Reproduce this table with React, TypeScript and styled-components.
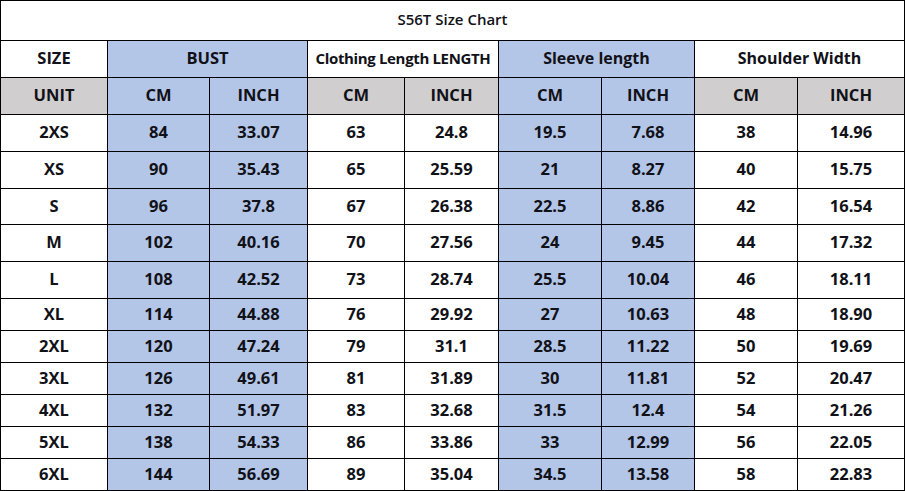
import React from "react";
import styled, { createGlobalStyle } from "styled-components";

const GlobalStyle = createGlobalStyle`
  html, body { margin: 0; padding: 0; background: #fff; }
  body { font-family: "Open Sans", "Liberation Sans", sans-serif; }
`;

const BLUE = "#b4c6e7";
const GRAY = "#d0cece";
const WHITE = "#ffffff";

const Chart = styled.div`
  display: grid;
  width: 905px;
  box-sizing: border-box;
  padding: 1px;
  gap: 1px;
  background: #000;
  grid-template-columns: 106px 101px 97px 96px 93px 102px 92px 102px 106px;
  grid-template-rows: 39px 36px 36px 36px 36px 35px 36px 36px 31px 31px 31px 31px 31px 31px;
`;

const Cell = styled.div<{ $bg?: string; $span?: number; $size?: number; $spacing?: number }>`
  display: flex;
  align-items: center;
  justify-content: center;
  box-sizing: border-box;
  padding-bottom: 3px;
  background: ${(p) => p.$bg || WHITE};
  grid-column: span ${(p) => p.$span || 1};
  font-size: ${(p) => p.$size || 16.5}px;
  letter-spacing: ${(p) => p.$spacing || 0}px;
  font-weight: 700;
  color: #111118;
  white-space: nowrap;
  overflow: hidden;
`;

const Title = styled(Cell)`
  font-weight: 600;
`;

const rows: string[][] = [
  ["2XS", "84", "33.07", "63", "24.8", "19.5", "7.68", "38", "14.96"],
  ["XS", "90", "35.43", "65", "25.59", "21", "8.27", "40", "15.75"],
  ["S", "96", "37.8", "67", "26.38", "22.5", "8.86", "42", "16.54"],
  ["M", "102", "40.16", "70", "27.56", "24", "9.45", "44", "17.32"],
  ["L", "108", "42.52", "73", "28.74", "25.5", "10.04", "46", "18.11"],
  ["XL", "114", "44.88", "76", "29.92", "27", "10.63", "48", "18.90"],
  ["2XL", "120", "47.24", "79", "31.1", "28.5", "11.22", "50", "19.69"],
  ["3XL", "126", "49.61", "81", "31.89", "30", "11.81", "52", "20.47"],
  ["4XL", "132", "51.97", "83", "32.68", "31.5", "12.4", "54", "21.26"],
  ["5XL", "138", "54.33", "86", "33.86", "33", "12.99", "56", "22.05"],
  ["6XL", "144", "56.69", "89", "35.04", "34.5", "13.58", "58", "22.83"],
];

const dataBg = (i: number) => (i === 1 || i === 2 || i === 5 || i === 6 ? BLUE : WHITE);
const unitBg = (i: number) => (i === 1 || i === 2 || i === 5 || i === 6 ? BLUE : GRAY);
const units = ["UNIT", "CM", "INCH", "CM", "INCH", "CM", "INCH", "CM", "INCH"];

export default function App() {
  return (
    <>
      <GlobalStyle />
      <Chart>
        <Title $span={9} $size={15}>S56T Size Chart</Title>
        <Cell>SIZE</Cell>
        <Cell $bg={BLUE} $span={2}>BUST</Cell>
        <Cell $span={2} $size={15} $spacing={-0.35}>Clothing Length LENGTH</Cell>
        <Cell $bg={BLUE} $span={2} $size={16}>Sleeve length</Cell>
        <Cell $span={2} $size={16}>Shoulder Width</Cell>
        {units.map((u, i) => (
          <Cell key={"u" + i} $bg={unitBg(i)}>{u}</Cell>
        ))}
        {rows.map((r, ri) =>
          r.map((v, i) => (
            <Cell key={ri + "-" + i} $bg={dataBg(i)}>{v}</Cell>
          ))
        )}
      </Chart>
    </>
  );
}
